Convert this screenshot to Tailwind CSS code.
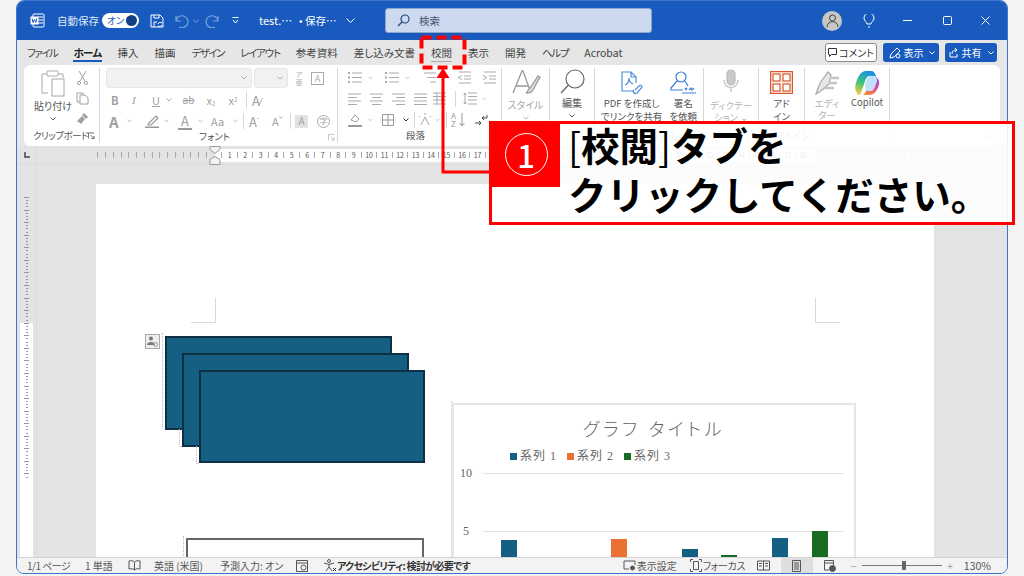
<!DOCTYPE html>
<html lang="ja">
  <head>
    <meta charset="UTF-8" />
    <title>校閲タブ</title>
    <script src="https://cdn.jsdelivr.net/npm/@tailwindcss/browser@4"></script>
  </head>
  <body class="relative w-[1024px] h-[576px] overflow-hidden bg-[#f3f3f3] font-['Noto_Sans_CJK_JP',sans-serif] [font-feature-settings:'palt'] text-[#444]">
    <div class="ml-[16px] w-[992px] h-[574px] flex flex-col overflow-hidden rounded-[8px] border border-[#3f74cc] bg-[#e3e3e3]">

      <!-- タイトルバー -->
      <header class="h-[39px] shrink-0 bg-[#185abd] flex items-center text-white text-[10.5px] pl-[13px]">
        <svg class="w-[15px] h-[15px]" viewBox="0 0 15 15"><rect x="3" y="1" width="11" height="13" rx="1" fill="none" stroke="#fff"/><path d="M8 4h5M8 7h5M8 10h5" stroke="#fff"/><rect x="0.5" y="3.5" width="8" height="8" fill="#fff"/><path d="M2 5.5l1 4 1.4-3 1.4 3 1-4" fill="none" stroke="#185abd"/></svg>
        <span class="ml-[12px] w-[45px] text-[#dfe8f7] whitespace-nowrap">自動保存</span>
        <span class="w-[37px] h-[15px] rounded-full bg-white flex items-center justify-between pl-[5px] pr-[2px] text-[#185abd] text-[9.5px] leading-none">オン<i class="block w-[11px] h-[11px] rounded-full bg-[#123f85]"></i></span>
        <svg class="ml-[11px] w-[14px] h-[14px]" viewBox="0 0 14 14" fill="none" stroke="#fff"><path d="M1 1h9l3 3v9H1z"/><path d="M4 1v3h5V1M4 13V8h3"/><path d="M8 10a2.5 2.5 0 0 1 4-1M12 11a2.5 2.5 0 0 1-4 1"/></svg>
        <svg class="ml-[11px] w-[14px] h-[14px]" viewBox="0 0 14 14" fill="none" stroke="#7fa3dd" stroke-width="1.2"><path d="M1 2v5h5M1 7a6 6 0 1 1 3 6"/></svg>
        <svg class="ml-[4px] w-[6px] h-[6px]" viewBox="0 0 6 6" fill="none" stroke="#7fa3dd"><path d="M0 1.5l3 3 3-3"/></svg>
        <svg class="ml-[6px] w-[14px] h-[14px]" viewBox="0 0 14 14" fill="none" stroke="#7fa3dd" stroke-width="1.2"><path d="M13 2v5H8M13 7a6 6 0 1 0-3 6"/></svg>
        <svg class="ml-[13px] w-[7px] h-[7px]" viewBox="0 0 7 7" fill="none" stroke="#fff"><path d="M0.5 0.5h6M1 3l2.5 3L6 3"/></svg>
        <span class="ml-[20px] w-[40px] whitespace-nowrap text-[11px]">test.⋯</span>
        <span class="w-[47px] whitespace-nowrap">• 保存⋯</span>
        <svg class="w-[9px] h-[6px]" viewBox="0 0 9 6" fill="none" stroke="#fff"><path d="M0.5 0.5l4 4 4-4"/></svg>
        <div class="ml-[30px] w-[267px] h-[25px] rounded-[3px] bg-[#ccd9ee] border border-[#8ea6cc] flex items-center pl-[11px] text-[#44546f] text-[10.5px]">
          <svg class="w-[13px] h-[13px]" viewBox="0 0 13 13" fill="none" stroke="#24477f" stroke-width="1.2"><circle cx="8" cy="5" r="4"/><path d="M5 8l-4 4"/></svg>
          <span class="ml-[9px]">検索</span>
        </div>
        <span class="ml-[170px] w-[20px] h-[20px] rounded-full bg-[#c8c6c4] flex items-center justify-center">
          <svg class="w-[13px] h-[13px]" viewBox="0 0 13 13" fill="none" stroke="#444"><circle cx="6.5" cy="4" r="3"/><path d="M1 13c0-7 11-7 11 0"/></svg>
        </span>
        <svg class="ml-[21px] w-[12px] h-[14px]" viewBox="0 0 12 14" fill="none" stroke="#fff"><path d="M4 10c0-2-3-3-3-6a5 5 0 0 1 10 0c0 3-3 4-3 6zM5 13h2"/></svg>
        <svg class="ml-[28px] w-[9px] h-[2px]" viewBox="0 0 9 2"><rect width="9" height="1" fill="#fff"/></svg>
        <svg class="ml-[31px] w-[9px] h-[9px]" viewBox="0 0 9 9" fill="none" stroke="#fff"><rect x="0.5" y="0.5" width="8" height="8" rx="1"/></svg>
        <svg class="ml-[29px] w-[9px] h-[9px]" viewBox="0 0 9 9" fill="none" stroke="#fff"><path d="M0.5 0.5l8 8M8.5 0.5l-8 8"/></svg>
      </header>

      <!-- タブ -->
      <nav class="h-[25px] shrink-0 flex items-center gap-[16px] pl-[10px] text-[10.5px] bg-[#e6e6e6] text-[#444] whitespace-nowrap">
        <span class="tracking-[-1.5px]">ファイル</span>
        <span class="relative font-bold text-[#222] tracking-[-0.6px]">ホーム<i class="absolute left-0 right-0 bottom-[-2px] h-[2px] bg-[#185abd]"></i></span>
        <span>挿入</span><span>描画</span>
        <span class="tracking-[-1.5px]">デザイン</span>
        <span class="tracking-[-1.2px]">レイアウト</span>
        <span>参考資料</span><span>差し込み文書</span>
        <span class="relative">校閲<i class="absolute left-0 right-0 bottom-[-2px] h-px bg-[#aaa]"></i></span>
        <span>表示</span><span>開発</span>
        <span class="tracking-[-1.3px]">ヘルプ</span>
        <span>Acrobat</span>
        <div class="ml-auto mr-[10px] flex gap-[6px] text-white text-[10px]">
          <span class="w-[52px] h-[19px] rounded-[3px] bg-white border border-[#8a8a8a] text-[#333] flex items-center justify-center gap-[2px]">
            <svg class="w-[9px] h-[9px]" viewBox="0 0 9 9" fill="none" stroke="#333"><path d="M0.5 0.5h8v6h-5l-2 2v-2h-1z"/></svg>コメント</span>
          <span class="w-[56px] h-[19px] rounded-[3px] bg-[#185abd] flex items-center justify-center gap-[2px]">
            <svg class="w-[14px] h-[14px]" viewBox="0 0 14 14" fill="none" stroke="#fff"><path d="M2 12l1-4 6-6 3 3-6 6z"/><circle cx="10" cy="10" r="2"/></svg>表示<svg class="ml-[3px] w-[6px] h-[4px]" viewBox="0 0 6 4" fill="none" stroke="#fff"><path d="M0.5 0.5l2.5 2.5 2.5-2.5"/></svg></span>
          <span class="w-[52px] h-[19px] rounded-[3px] bg-[#185abd] flex items-center justify-center gap-[3px]">
            <svg class="w-[10px] h-[10px]" viewBox="0 0 10 10" fill="none" stroke="#fff"><path d="M1 4v5h7V6M3 6c0-3 2-4 4-4M6 0l2 2-2 2"/></svg>共有<svg class="ml-[3px] w-[6px] h-[4px]" viewBox="0 0 6 4" fill="none" stroke="#fff"><path d="M0.5 0.5l2.5 2.5 2.5-2.5"/></svg></span>
        </div>
      </nav>

      <!-- リボン -->
      <div class="h-[81px] shrink-0 bg-[#e6e6e6] px-[7px]">
        <div class="relative h-full w-[976px] rounded-[6px] bg-white flex text-[9.5px] text-[#555] leading-none">

          <!-- クリップボード -->
          <section class="w-[76px] shrink-0 border-r border-[#d8d8d8] my-[3px] flex flex-col">
            <div class="flex-1 flex">
              <div class="w-[58px] flex flex-col items-center pt-[2px]">
                <svg class="w-[24px] h-[27px]" viewBox="0 0 24 27" fill="none" stroke="#a8a8a8"><path d="M7 23H1V4h5M17 4h5v4"/><rect x="6" y="1" width="11" height="5" rx="1"/><rect x="11" y="9" width="12" height="17" fill="#fff"/></svg>
                <span class="mt-[4px] text-[10px] whitespace-nowrap">貼り付け</span>
                <svg class="mt-[6px] w-[6px] h-[4px]" viewBox="0 0 6 4" fill="none" stroke="#666"><path d="M0.5 0.5l2.5 2.5 2.5-2.5"/></svg>
              </div>
              <div class="flex flex-col items-center gap-[7px] pt-[3px] ml-[-6px]">
                <svg class="w-[13px] h-[14px]" viewBox="0 0 13 14" fill="none" stroke="#a0a0a0"><path d="M3 0l6 10M10 0L4 10"/><circle cx="3" cy="12" r="1.6"/><circle cx="10" cy="12" r="1.6"/></svg>
                <svg class="w-[13px] h-[13px]" viewBox="0 0 13 13" fill="none" stroke="#a0a0a0"><path d="M4 10H1V1h6v2"/><path d="M4 3h5l3 3v6H4z"/></svg>
                <svg class="w-[13px] h-[13px]" viewBox="0 0 13 13" fill="#a0a0a0"><path d="M8 1l4 4-2 2-4-4zM6 4l3 3-4 5-4-3z"/></svg>
              </div>
            </div>
            <div class="h-[14px] flex items-center pl-[9px] pr-[4px] justify-between text-[9.5px] whitespace-nowrap tracking-[-0.5px]">クリップボード
              <svg class="w-[8px] h-[8px]" viewBox="0 0 8 8" fill="none" stroke="#555"><path d="M0.5 7V0.5H7M3 3l4 4M4 7h3V4"/></svg></div>
          </section>

          <!-- フォント -->
          <section class="w-[238px] shrink-0 border-r border-[#d8d8d8] my-[3px] pl-[6px] flex flex-col">
            <div class="flex-1 flex flex-col">
              <div class="h-[20px] flex items-center text-[#b0b0b0]">
                <span class="w-[146px] h-[20px] rounded-[3px] bg-[#f1f1f1] border border-[#e6e6e6] flex items-center justify-end pr-[4px]"><svg class="w-[6px] h-[4px]" viewBox="0 0 6 4" fill="none" stroke="#aaa"><path d="M0.5 0.5l2.5 2.5 2.5-2.5"/></svg></span>
                <span class="ml-[2px] w-[34px] h-[20px] rounded-[3px] bg-[#f1f1f1] border border-[#e6e6e6] flex items-center justify-end pr-[4px]"><svg class="w-[6px] h-[4px]" viewBox="0 0 6 4" fill="none" stroke="#aaa"><path d="M0.5 0.5l2.5 2.5 2.5-2.5"/></svg></span>
                <span class="ml-[6px] w-[10px] text-[7px] text-center leading-[8px]">ア<br />亜</span>
                <span class="ml-[7px] w-[13px] h-[13px] border border-[#aaa] flex items-center justify-center text-[9px]">A</span>
              </div>
              <div class="mt-[2px] h-[20px] flex items-center text-[#a0a0a0] text-[11px] pl-[5px]">
                <b class="w-[21px]">B</b><i class="w-[20px] font-['Liberation_Serif',serif]">I</i><u class="w-[14px]">U</u>
                <svg class="w-[6px] h-[4px] mr-[5px]" viewBox="0 0 6 4" fill="none" stroke="#aaa"><path d="M0.5 0.5l2.5 2.5 2.5-2.5"/></svg>
                <s class="w-[23px] text-[10px] text-center">ab</s><span class="w-[22px] text-center">x<sub class="text-[6px]">2</sub></span><span class="w-[22px] text-center">x<sup class="text-[6px]">2</sup></span>
                <i class="w-px h-[16px] bg-[#d8d8d8] ml-[2px]"></i><span class="ml-[5px] text-[13px]">A<span class="text-[10px]">⁄</span></span>
              </div>
              <div class="mt-[1px] h-[20px] flex items-center text-[#a0a0a0] pl-[3px] text-[13px]">
                <b class="w-[18px] text-[15px]">A</b><svg class="w-[5px] h-[4px] mr-[13px]" viewBox="0 0 6 4" fill="none" stroke="#aaa"><path d="M0.5 0.5l2.5 2.5 2.5-2.5"/></svg>
                <svg class="w-[14px] h-[14px]" viewBox="0 0 14 14" fill="none" stroke="#999" stroke-width="1.2"><path d="M4 9l7-7 2 2-7 7-3 0z"/><path d="M0 13.5h14" stroke-width="2"/></svg>
                <svg class="ml-[5px] w-[5px] h-[4px] mr-[9px]" viewBox="0 0 6 4" fill="none" stroke="#aaa"><path d="M0.5 0.5l2.5 2.5 2.5-2.5"/></svg>
                <span class="w-[14px] border-b-2 border-[#999] leading-[15px] text-center">A</span><svg class="ml-[6px] w-[5px] h-[4px] mr-[8px]" viewBox="0 0 6 4" fill="none" stroke="#aaa"><path d="M0.5 0.5l2.5 2.5 2.5-2.5"/></svg>
                <span class="w-[22px] text-[11px]">Aa</span><svg class="w-[5px] h-[4px] mr-[5px]" viewBox="0 0 6 4" fill="none" stroke="#aaa"><path d="M0.5 0.5l2.5 2.5 2.5-2.5"/></svg>
                <i class="w-px h-[16px] bg-[#d8d8d8]"></i><span class="ml-[5px] w-[23px]">A<sup class="text-[7px]">ˆ</sup></span><span class="w-[12px] text-[11px]">A<sup class="text-[7px]">ˇ</sup></span>
                <i class="ml-[6px] w-px h-[16px] bg-[#d8d8d8]"></i>
                <span class="ml-[4px] w-[13px] h-[13px] bg-[#e2e2e2] text-[10px] flex items-center justify-center">A</span>
                <span class="ml-[9px] w-[13px] h-[13px] rounded-full border border-[#aaa] text-[8px] flex items-center justify-center">字</span>
              </div>
            </div>
            <div class="h-[14px] flex items-center text-[9.5px] justify-between pl-[93px] pr-[2px]">フォント
              <svg class="w-[7px] h-[7px]" viewBox="0 0 8 8" fill="none" stroke="#bbb"><path d="M0.5 7V0.5H7M3 3l4 4M4 7h3V4"/></svg></div>
          </section>

          <!-- 段落 -->
          <section class="w-[164px] shrink-0 border-r border-[#d8d8d8] my-[3px] pl-[10px] flex flex-col">
            <div class="flex-1 flex flex-col gap-[4px] pt-[1px]">
              <div class="h-[17px] flex items-center gap-[6px]">
                <svg class="w-[14px] h-[13px]" viewBox="0 0 14 13" stroke="#aaa"><path d="M4 2h10M4 6.500h10M4 11h10" /><path d="M0 2h2M0 6.500h2M0 11h2" stroke-width="2"/></svg>
                <svg class="w-[5px] h-[4px] mr-[6px]" viewBox="0 0 6 4" fill="none" stroke="#bbb"><path d="M0.5 0.5l2.5 2.5 2.5-2.5"/></svg>
                <svg class="w-[14px] h-[13px]" viewBox="0 0 14 13" stroke="#aaa"><path d="M4 2h10M4 6.500h10M4 11h10"/><path d="M0 2h2M0 6.500h2M0 11h2" stroke-width="2"/></svg>
                <svg class="w-[5px] h-[4px] mr-[6px]" viewBox="0 0 6 4" fill="none" stroke="#bbb"><path d="M0.5 0.5l2.5 2.5 2.5-2.5"/></svg>
                <svg class="w-[14px] h-[13px]" viewBox="0 0 14 13" stroke="#aaa"><path d="M2 2h12M5 6.500h9M8 11h6"/></svg>
                <svg class="w-[5px] h-[4px] mr-[4px]" viewBox="0 0 6 4" fill="none" stroke="#bbb"><path d="M0.5 0.5l2.5 2.5 2.5-2.5"/></svg>
                <svg class="w-[14px] h-[13px]" viewBox="0 0 14 13" fill="none" stroke="#aaa"><path d="M2 1h12M7 5h7M7 8h7M2 12h12M5 4.500L1 6.500l4 2"/></svg>
                <svg class="ml-[5px] w-[14px] h-[13px]" viewBox="0 0 14 13" fill="none" stroke="#aaa"><path d="M2 1h12M7 5h7M7 8h7M2 12h12M1 4.500l4 2-4 2"/></svg>
              </div>
              <div class="h-[17px] flex items-center gap-[9px]">
                <svg class="w-[13px] h-[12px]" viewBox="0 0 13 12" stroke="#aaa"><path d="M0 1h13M0 4.500h9M0 8h13M0 11.500h9"/></svg>
                <svg class="w-[13px] h-[12px]" viewBox="0 0 13 12" stroke="#aaa"><path d="M0 1h13M2 4.500h9M0 8h13M2 11.500h9"/></svg>
                <svg class="w-[13px] h-[12px]" viewBox="0 0 13 12" stroke="#aaa"><path d="M0 1h13M4 4.500h9M0 8h13M4 11.500h9"/></svg>
                <svg class="w-[13px] h-[12px]" viewBox="0 0 13 12" stroke="#aaa"><path d="M0 1h13M0 4.500h13M0 8h13M0 11.500h13"/></svg>
                <svg class="ml-[-3px] w-[13px] h-[13px]" viewBox="0 0 13 13" fill="none" stroke="#aaa"><path d="M0 1h13M0 4.500h13M0 8h13M0 12h13M4 1v11M9 1v11"/></svg>
                <i class="w-px h-[16px] bg-[#d8d8d8]"></i>
                <svg class="ml-[-2px] w-[14px] h-[13px]" viewBox="0 0 14 13" fill="none" stroke="#aaa"><path d="M5 1h9M5 4.500h9M5 8h9M5 12h9M2 1v11M0.5 3L2 1l1.500 2M0.500 10L2 12l1.500-2"/></svg>
                <svg class="ml-[-4px] w-[5px] h-[4px]" viewBox="0 0 6 4" fill="none" stroke="#bbb"><path d="M0.5 0.5l2.5 2.5 2.5-2.5"/></svg>
              </div>
              <div class="h-[17px] flex items-center">
                <svg class="w-[14px] h-[14px]" viewBox="0 0 14 14" fill="none" stroke="#999"><path d="M3 7l4-5 4 4-3 3z"/><path d="M0 13h14" stroke-width="2"/></svg>
                <svg class="ml-[6px] mr-[9px] w-[5px] h-[4px]" viewBox="0 0 6 4" fill="none" stroke="#bbb"><path d="M0.5 0.5l2.5 2.5 2.5-2.5"/></svg>
                <svg class="w-[12px] h-[12px]" viewBox="0 0 12 12" fill="none" stroke="#999"><path d="M.5.5h11v11H.5zM6 .5v11M.5 6h11"/></svg>
                <svg class="ml-[9px] w-[6px] h-[4px]" viewBox="0 0 6 4" fill="none" stroke="#333"><path d="M0.5 0.5l2.5 2.5 2.5-2.5"/></svg>
                <i class="ml-[5px] w-px h-[16px] bg-[#d8d8d8]"></i>
                <svg class="ml-[3px] w-[14px] h-[13px]" viewBox="0 0 14 13" fill="none" stroke="#aaa"><path d="M3 12l4-8 4 8M1 3l1 1M13 3l-1 1M7 0v2"/></svg>
                <svg class="ml-[3px] w-[5px] h-[4px]" viewBox="0 0 6 4" fill="none" stroke="#bbb"><path d="M0.5 0.5l2.5 2.5 2.5-2.5"/></svg>
                <i class="ml-[6px] w-px h-[16px] bg-[#d8d8d8]"></i>
                <span class="ml-[4px] w-[8px] text-[8px] leading-[8px] text-[#999]">A<br />Z</span>
                <svg class="w-[6px] h-[14px]" viewBox="0 0 6 14" fill="none" stroke="#999"><path d="M3 0v13M.5 10L3 13l2.500-3"/></svg>
                <svg class="ml-[10px] w-[13px] h-[12px]" viewBox="0 0 13 12" fill="none" stroke="#444"><path d="M12 1v3H7M9 2L7 4l2 2M0 9h6M4 7l2 2-2 2"/></svg>
              </div>
            </div>
            <div class="h-[14px] flex items-center pl-[58px] text-[9.5px]">段落</div>
          </section>

          <!-- スタイル -->
          <section class="w-[48px] shrink-0 border-r border-[#d8d8d8] my-[3px] flex flex-col items-center pt-[1px] text-[#aaa]">
            <svg class="w-[30px] h-[26px]" viewBox="0 0 30 26" fill="none" stroke="#999" stroke-width="1.3"><path d="M2 24L11 2h1l8 22M5 17h12"/><path d="M15 24c2-1 2-4 4-5l8-12 2 1-7 13c-1 2-4 3-7 3z" fill="#ddd"/></svg>
            <span class="mt-[5px] text-[10px] whitespace-nowrap">スタイル</span>
            <svg class="mt-[6px] w-[6px] h-[4px]" viewBox="0 0 6 4" fill="none" stroke="#bbb"><path d="M0.5 0.5l2.5 2.5 2.5-2.5"/></svg>
          </section>

          <!-- 編集 -->
          <section class="w-[45px] shrink-0 border-r border-[#d8d8d8] my-[3px] flex flex-col items-center pt-[1px]">
            <svg class="w-[25px] h-[25px]" viewBox="0 0 25 25" fill="none" stroke="#666" stroke-width="1.2"><circle cx="15" cy="10" r="9"/><path d="M8.500 16L1 24"/></svg>
            <span class="mt-[4px] text-[10px]">編集</span>
            <svg class="mt-[6px] w-[6px] h-[4px]" viewBox="0 0 6 4" fill="none" stroke="#555"><path d="M0.5 0.5l2.5 2.5 2.5-2.5"/></svg>
          </section>

          <!-- Acrobat -->
          <section class="w-[109px] shrink-0 border-r border-[#d8d8d8] my-[3px] flex justify-center gap-[7px] pt-[3px] text-[9.5px] text-center whitespace-nowrap">
            <div class="flex flex-col items-center">
              <svg class="w-[22px] h-[24px]" viewBox="0 0 22 24" fill="none" stroke="#4a8ee0" stroke-width="1.2"><path d="M13 20H1V1h9l5 5v6M10 1v5h5"/><path d="M4 14c3-1 4-4 4-7 0 3 2 5 4 6M14 19l5-5a2 2 0 0 1 2 2l-5 6a2 2 0 0 1-3-3"/></svg>
              <span class="mt-[2px] leading-[13px]">PDF を作成し<br />でリンクを共有</span>
            </div>
            <div class="flex flex-col items-center">
              <svg class="w-[26px] h-[23px]" viewBox="0 0 26 23" fill="none" stroke="#3a80dc" stroke-width="1.2"><circle cx="11" cy="6" r="5"/><path d="M7 10L1 17v2h12M15 10l3 5"/><path d="M15 17l2 2m0-2l-2 2M19 19l2-2 1 2 2-2M12 22h14"/></svg>
              <span class="mt-[3px] leading-[13px]">署名<br />を依頼</span>
            </div>
          </section>

          <!-- ディクテーション -->
          <section class="w-[55px] shrink-0 border-r border-[#d8d8d8] my-[3px] flex flex-col items-center pt-[1px] text-[#b4b4b4] text-center">
            <svg class="w-[16px] h-[24px]" viewBox="0 0 16 24" fill="none" stroke="#bbb" stroke-width="1.200"><rect x="4" y="1" width="8" height="15" rx="4" fill="#c8c8c8"/><path d="M1 11c0 10 14 10 14 0M8 19v4"/></svg>
            <span class="mt-[6px] leading-[12px] whitespace-nowrap">ディクテー<br />ション ⌄</span>
          </section>

          <!-- アドイン -->
          <section class="w-[46px] shrink-0 border-r border-[#d8d8d8] my-[3px] flex flex-col items-center pt-[3px] text-center">
            <svg class="w-[23px] h-[23px]" viewBox="0 0 23 23" fill="none" stroke="#d9572b" stroke-width="1.200"><rect x=".6" y=".6" width="21.800" height="21.800" fill="#fdf0ea"/><rect x="3" y="3" width="7" height="7" fill="#fff"/><rect x="13" y="3" width="7" height="7" fill="#fff"/><rect x="3" y="13" width="7" height="7" fill="#fff"/><rect x="13" y="13" width="7" height="7" fill="#fff"/></svg>
            <span class="mt-[3px] leading-[13px]">アド<br />イン</span>
          </section>

          <!-- エディター / Copilot -->
          <section class="w-[85px] shrink-0 border-r border-[#d8d8d8] my-[3px] flex pt-[3px] pl-[9px] gap-[11px] text-center">
            <div class="flex flex-col items-center text-[#b4b4b4] w-[26px]">
              <svg class="w-[26px] h-[24px]" viewBox="0 0 26 24" fill="none" stroke="#aaa" stroke-width="1.200"><path d="M2 23l4-11L14 1l3 3-2 9-8 7z" fill="#e6e6e6"/><path d="M16 7h9M15 12h8M11 17h9" stroke-width="2.500" stroke="#c4c4c4"/></svg>
              <span class="mt-[2px] leading-[12px]">エディ<br />ター</span>
            </div>
            <div class="flex flex-col items-center">
              <svg class="w-[25px] h-[24px]" viewBox="0 0 25 24">
                <defs>
                  <linearGradient id="cpa" x1="0.6" y1="0" x2="0.3" y2="1"><stop offset="0" stop-color="#1a8fe8"/><stop offset=".5" stop-color="#35c47c"/><stop offset="1" stop-color="#f7c93a"/></linearGradient>
                  <linearGradient id="cpb" x1="0.7" y1="0" x2="0.3" y2="1"><stop offset="0" stop-color="#7a5be8"/><stop offset=".5" stop-color="#e8479a"/><stop offset="1" stop-color="#f58a35"/></linearGradient>
                </defs>
                <path d="M11 0h5c3 0 4 2 5 5h-6c-3 0-4 2-5 5l-3 9c-1 3-2 5-4 5-2-3-4-7-2-12 2-7 5-12 10-12z" fill="url(#cpa)"/>
                <path d="M20 5c3 2 5 5 4 9-2 6-5 10-10 10H7c2 0 3-2 4-4h4c3 0 4-2 5-5l2-5c0-2-1-4-2-5z" fill="url(#cpb)"/>
                <path d="M15 5h6l1 5-2 5c-1 3-2 5-5 5h-4l-1-6 1-4c1-3 2-5 4-5z" fill="#8ec8f5" opacity=".55"/>
              </svg>
              <span class="mt-[3px]">Copilot</span>
            </div>
          </section>

          <svg class="absolute right-[7px] bottom-[7px] w-[8px] h-[5px]" viewBox="0 0 8 5" fill="none" stroke="#999"><path d="M0.5 0.5l3.500 3.500 3.500-3.500"/></svg>
          <span class="absolute left-[626px] bottom-[5px] text-[#777] text-[10px]">Acrobat</span>
          <span class="absolute left-[751px] bottom-[5px] text-[#777] text-[10px]">アドイン</span>
        </div>
      </div>

      <!-- ルーラー -->
      <div class="relative h-[19px] shrink-0 flex items-center bg-[#e3e3e3] border-b border-[#dcdcdc]">
        <div class="w-[20px] h-full border-r border-[#dcdcdc] flex items-center justify-center">
          <svg class="w-[6px] h-[6px]" viewBox="0 0 6 6" fill="none" stroke="#444" stroke-width="1.500"><path d="M1 0v5h5"/></svg>
        </div>
        <div id="ruler-left" class="w-[178px] pl-[57px] flex items-center h-[13px]"></div>
        <div id="ruler-main" class="w-[600px] h-[13px] bg-white flex items-center pl-[3px]"></div>
        <div id="ruler-right" class="flex items-center h-[13px]"></div>
        <svg class="absolute left-[192px] top-0 w-[12px] h-[19px]" viewBox="0 0 12 19" fill="#f3f3f3" stroke="#999"><path d="M1 .5h10v3l-5 4-5-4zM1 18.500v-5l5-3 5 3v5z"/></svg>
      </div>

      <!-- 本文 -->
      <div class="flex-1 min-h-0 flex">
        <div class="relative w-[20px] shrink-0 border-r border-[#dcdcdc] pt-[31px] overflow-hidden">
          <i class="absolute left-[3px] right-[3px] top-[158px] bottom-0 bg-white"></i>
          <div id="ruler-v" class="relative flex flex-col items-center"></div>
        </div>
        <div class="flex-1 pl-[59px] pt-[19px]">
          <div class="relative w-[838px] h-full bg-white overflow-hidden">
            <!-- 余白マーク -->
            <i class="absolute left-[95px] top-[114px] w-[25px] h-[25px] border-r border-b border-[#d9d9d9]"></i>
            <i class="absolute left-[719px] top-[114px] w-[25px] h-[25px] border-l border-b border-[#d9d9d9]"></i>

            <!-- 図形 -->
            <span class="absolute left-[49px] top-[150px] w-[15px] h-[15px] border border-[#aaa] bg-[#eee] flex items-center justify-center">
              <svg class="w-[11px] h-[11px]" viewBox="0 0 11 11" fill="#777"><circle cx="4" cy="2.500" r="2"/><path d="M0 9c0-4 8-4 8 0z"/><circle cx="8.500" cy="8.500" r="2" fill="none" stroke="#999"/></svg>
            </span>
            <i class="absolute left-[66px] top-[149px] w-[230px] h-[96px] border-l border-dotted border-[#bbb]"></i>
            <i class="absolute left-[69px] top-[152px] w-[227px] h-[94px] bg-[#156082] border-2 border-[#0e2f44]"></i>
            <i class="absolute left-[83px] top-[245px] w-[3px] h-[18px] border-l border-b border-dotted border-[#bbb]"></i>
            <i class="absolute left-[86px] top-[169px] w-[227px] h-[94px] bg-[#156082] border-2 border-[#0e2f44]"></i>
            <i class="absolute left-[100px] top-[262px] w-[3px] h-[18px] border-l border-b border-dotted border-[#bbb]"></i>
            <i class="absolute left-[103px] top-[186px] w-[226px] h-[93px] bg-[#156082] border-2 border-[#0e2f44]"></i>
            <i class="absolute left-[90px] top-[354px] w-[238px] h-[40px] border-2 border-[#666] bg-white"></i>
            <i class="absolute left-[87px] top-[352px] h-[30px] border-l border-dotted border-[#bbb]"></i>

            <!-- グラフ -->
            <i class="absolute left-[355px] top-[217px] h-[160px] border-l border-dotted border-[#ccc]"></i>
            <div class="absolute left-[356px] top-[219px] w-[404px] h-[180px] border-2 border-[#e6e6e6] text-[#666] font-['Liberation_Serif','Noto_Sans_CJK_JP',serif]">
              <p class="mt-[10px] text-center text-[18px] leading-[30px] tracking-[3.5px] font-light text-[#666]">グラフ タイトル</p>
              <div class="flex items-center ml-[56px] mt-[3px] h-[16px] text-[12px] tracking-[1px]">
                <i class="w-[7px] h-[7px] bg-[#156082] mr-[3px]"></i><span class="w-[47px] whitespace-nowrap">系列 1</span>
                <i class="w-[7px] h-[7px] bg-[#e97132] mr-[3px]"></i><span class="w-[47px] whitespace-nowrap">系列 2</span>
                <i class="w-[7px] h-[7px] bg-[#196b24] mr-[3px]"></i><span class="whitespace-nowrap">系列 3</span>
              </div>
              <span class="absolute left-[2px] top-[59px] w-[20px] text-[12px] leading-[18px] text-center">10</span>
              <span class="absolute left-[2px] top-[117px] w-[20px] text-[12px] leading-[18px] text-center">5</span>
              <i class="absolute left-[29px] top-[68px] w-[361px] h-px bg-[#e3e3e3]"></i>
              <i class="absolute left-[29px] top-[126px] w-[361px] h-px bg-[#e3e3e3]"></i>
              <i class="absolute left-[47px] top-[135px] w-[16px] h-[60px] bg-[#156082]"></i>
              <i class="absolute left-[157px] top-[134px] w-[16px] h-[60px] bg-[#e97132]"></i>
              <i class="absolute left-[228px] top-[144px] w-[16px] h-[50px] bg-[#156082]"></i>
              <i class="absolute left-[267px] top-[150px] w-[16px] h-[40px] bg-[#196b24]"></i>
              <i class="absolute left-[318px] top-[133px] w-[16px] h-[60px] bg-[#156082]"></i>
              <i class="absolute left-[358px] top-[126px] w-[16px] h-[60px] bg-[#196b24]"></i>
            </div>
          </div>
        </div>
      </div>

      <!-- ステータスバー -->
      <footer class="relative z-10 h-[16px] shrink-0 bg-[#f3f3f3] border-t border-[#d4d4d4] flex items-center text-[10px] text-[#555] whitespace-nowrap pl-[10px]">
        <span class="w-[58px] tracking-[-0.5px]">1/1 ページ</span>
        <span class="w-[43px]">1 単語</span>
        <svg class="w-[13px] h-[11px]" viewBox="0 0 13 11" fill="none" stroke="#555"><path d="M6.500 2C5 .5 3 .5 1 1v8c2-.5 4-.5 5.500 1 1.500-1.500 3.500-1.500 5.500-1V1c-2-.5-4-.5-5.500 1zM6.500 2v8"/></svg>
        <span class="ml-[13px] w-[66px]">英語 (米国)</span>
        <span class="w-[76px]">予測入力: オン</span>
        <svg class="w-[12px] h-[12px]" viewBox="0 0 12 12" fill="none" stroke="#555"><path d="M0.500 0.500h11v11H.5zM0.500 3h11"/><circle cx="7.500" cy="7.500" r="2.500"/></svg>
        <svg class="ml-[14px] w-[15px] h-[13px]" viewBox="0 0 15 13" fill="none" stroke="#555"><circle cx="7" cy="2" r="1.500"/><path d="M2 4l5 1.500L12 4M7 6v2l-3 4M7 8l3 4"/><path d="M11 9l3 3m0-3l-3 3" stroke="#333"/></svg>
        <span class="font-bold text-[#333] tracking-[-0.7px]">アクセシビリティ: 検討が必要です</span>
        <div class="ml-auto flex items-center h-full">
          <svg class="w-[13px] h-[11px]" viewBox="0 0 13 11" fill="none" stroke="#555"><path d="M6 9H1V1h11v4"/><circle cx="9.500" cy="8" r="2" fill="#555"/></svg>
          <span class="ml-[1px] w-[53px]">表示設定</span>
          <svg class="w-[12px] h-[13px]" viewBox="0 0 12 13" fill="none" stroke="#555"><path d="M0.500 3V.5h2.500M9 .5h2.500V3M.5 10v2.500H3M9 12.500h2.500V10"/><path d="M3.500 2.500h5v8h-5z"/></svg>
          <span class="ml-[1px] w-[54px] tracking-[-0.4px]">フォーカス</span>
          <svg class="w-[13px] h-[11px]" viewBox="0 0 13 11" fill="none" stroke="#555"><path d="M0.500 1h12v9H.5zM6.500 1v9M2 3.500h3M2 6h3M8 3.500h3M8 6h3"/></svg>
          <span class="ml-[11px] w-[32px] h-full bg-[#dedede] flex items-center justify-center">
            <svg class="w-[9px] h-[12px]" viewBox="0 0 9 12" fill="none" stroke="#555"><path d="M.5.5h8v11h-8zM2 3h5M2 5h5M2 7h5M2 9h5"/></svg>
          </span>
          <svg class="ml-[11px] w-[12px] h-[12px]" viewBox="0 0 12 12" fill="none" stroke="#555"><path d="M5 10H.5V.5h9V5M.5 3h9"/><circle cx="8.500" cy="8.500" r="3" fill="#555"/></svg>
          <span class="ml-[15px] text-[#999]">−</span>
          <span class="relative ml-[6px] w-[80px] h-px bg-[#777]"><i class="absolute left-[40px] top-[-4px] w-[4px] h-[9px] bg-[#666] rounded-[1px]"></i></span>
          <span class="ml-[5px] text-[#999]">+</span>
          <span class="ml-[11px] mr-[16px] text-[10.5px]">130%</span>
        </div>
      </footer>
    </div>

    <!-- 注釈 -->
    <svg class="absolute left-0 top-0 w-[1024px] h-[576px] pointer-events-none" viewBox="0 0 1024 576" fill="none">
      <rect x="421.500" y="37.500" width="43" height="30" stroke="#ff0000" stroke-width="4" stroke-dasharray="10 5"/>
      <path d="M492 172H443V76" stroke="#ff0000" stroke-width="3"/>
      <path d="M443 68l-6.500 10h13z" fill="#ff0000"/>
    </svg>
    <div class="absolute left-[489px] top-[121px] w-[526px] h-[104px] border-[3px] border-[#ff0000] bg-white/90 flex text-black [font-feature-settings:normal]">
      <span class="shrink-0 w-[68px] h-[63px] bg-[#ff0000] flex items-center justify-center pb-[3px]">
        <span class="w-[43px] h-[43px] rounded-full border-[1.5px] border-white text-white font-medium text-[31px] leading-none flex items-center justify-center">1</span>
      </span>
      <p class="ml-[8px] -mt-[4px] text-[38.5px] font-bold leading-[49px] whitespace-nowrap"><span class="font-normal">[</span>校閲<span class="font-normal">]</span>タブを<br />クリックしてください。</p>
    </div>

    <script>
      // ルーラーの目盛りを作る
      const tick = '<span class="w-[7.75px] shrink-0 flex justify-center"><i class="block w-px h-[6px] bg-[#aaa]"></i></span>';
      document.getElementById("ruler-left").innerHTML = tick.repeat(15);
      document.getElementById("ruler-right").innerHTML = tick.repeat(15);
      let main = "";
      for (let n = 1; n <= 38; n++) {
        main += tick + '<span class="w-[7.75px] shrink-0 flex justify-center text-[7px] text-[#555] leading-none">' + n + "</span>";
      }
      document.getElementById("ruler-main").innerHTML = main;
      let v = "";
      for (let i = 0; i < 90; i++) {
        const big = i % 4 === 0;
        v += '<span class="h-[3.15px] flex items-center"><i class="block h-px bg-[#999] ' + (big ? "w-[5px]" : "w-[2px]") + '"></i></span>';
      }
      document.getElementById("ruler-v").innerHTML = v;
    </script>
  </body>
</html>
